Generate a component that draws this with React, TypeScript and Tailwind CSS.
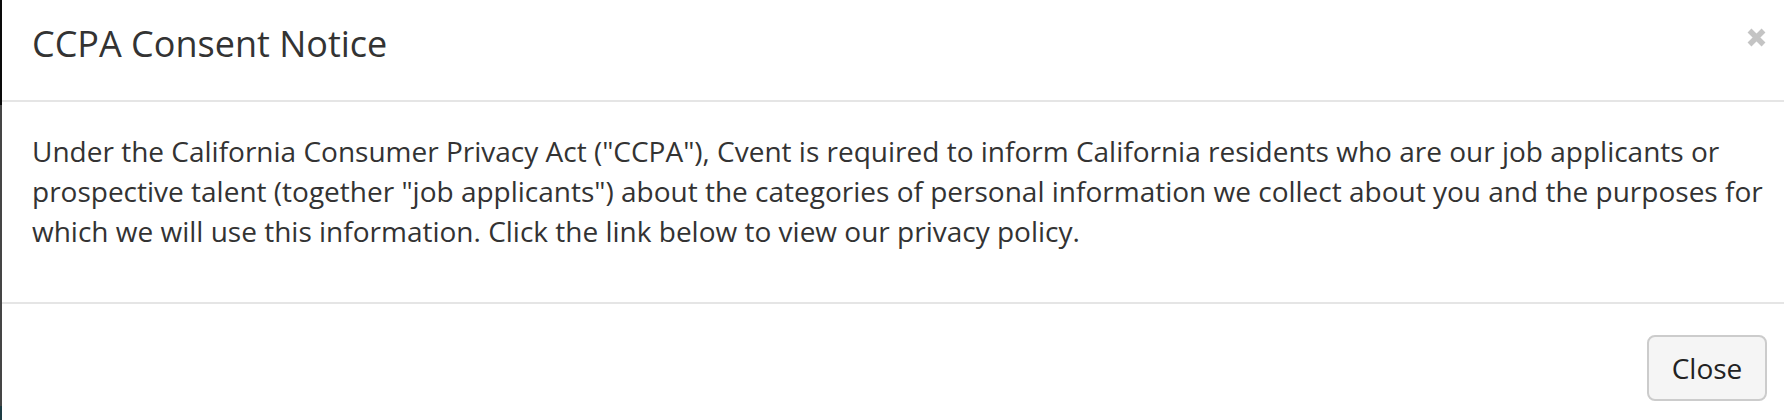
import React from "react";

export default function App() {
  return (
    <div className="flex h-[420px] w-[1784px] overflow-hidden bg-white" style={{ fontFamily: '"Open Sans", "Noto Sans", sans-serif' }}>
      <div className="flex w-[2px] shrink-0 flex-col">
        <div className="h-[105px] bg-[#0a0a0a]" />
        <div className="h-[301px] bg-[#454545]" />
        <div className="flex-1 bg-[#1d3c44]" />
      </div>
      <div className="flex flex-1 flex-col bg-white text-[#333333]">
        <div className="relative h-[100px] pl-[30px] pr-[17px] pt-[24px]">
          <h4 className="m-0 text-[36px] font-normal leading-[40px]">CCPA Consent Notice</h4>
          <button className="absolute right-[18px] top-[28px] h-[19px] w-[19px]" aria-label="Close">
            <svg width="19" height="19" viewBox="0 0 19 19">
              <path d="M2.5 2.5 L16.5 16.5 M16.5 2.5 L2.5 16.5" stroke="#c4c4c4" strokeWidth="5.5" strokeLinecap="butt" />
            </svg>
          </button>
        </div>
        <div className="h-[2px] bg-[#e5e5e5]" />
        <div className="h-[200px] pl-[30px] pr-[15px] pt-[29px]">
          <p className="m-0 text-[28px] leading-[40px]">
            Under the California Consumer Privacy Act ("CCPA"), Cvent is required to inform California residents who are our job applicants or prospective talent (together "job applicants") about the categories of personal information we collect about you and the purposes for which we will use this information. Click the link below to view our privacy policy.
          </p>
        </div>
        <div className="h-[2px] bg-[#e5e5e5]" />
        <div className="flex justify-end pr-[17px] pt-[31px]">
          <button className="flex h-[66px] w-[120px] items-center justify-center rounded-[8px] border-2 border-[#cccccc] bg-[#f5f5f5] text-[28px] leading-[40px] text-[#222222]">
            Close
          </button>
        </div>
      </div>
    </div>
  );
}
